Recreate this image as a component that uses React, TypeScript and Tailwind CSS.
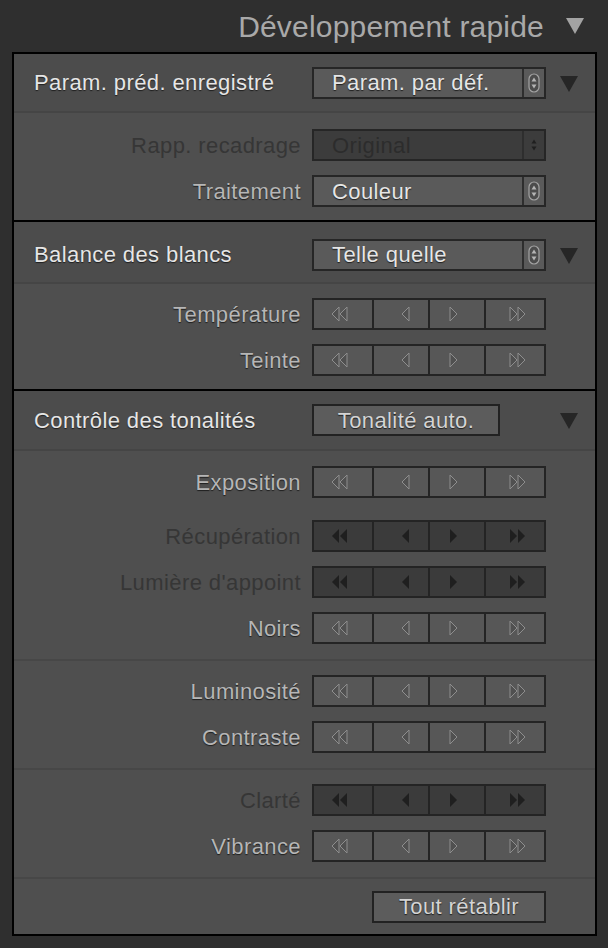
import React from 'react';

const font = '[font-family:"Liberation_Sans",Arial,sans-serif]';
const shadow = '[text-shadow:0_1px_1px_#1e1e1e]';

function Tri({ dir, x, dim }: { dir: 'l' | 'r'; x: number; dim?: boolean }) {
  const pts = dir === 'l' ? `${x + 7},1 ${x},8 ${x + 7},15` : `${x},1 ${x + 7},8 ${x},15`;
  return dim ? (
    <polygon points={pts} fill="#1f1f1f" />
  ) : (
    <polygon points={pts} fill="#505050" stroke="#8e8e8e" strokeWidth="1" strokeLinejoin="round" />
  );
}

function StepIcon({ kind, dim }: { kind: 'll' | 'l' | 'r' | 'rr'; dim?: boolean }) {
  const w = kind.length === 2 ? 18 : 9;
  return (
    <svg width={w} height={16} viewBox={`0 0 ${w} 16`}>
      {kind === 'll' && (
        <>
          <Tri dir="l" x={1} dim={dim} />
          <Tri dir="l" x={9} dim={dim} />
        </>
      )}
      {kind === 'l' && <Tri dir="l" x={1} dim={dim} />}
      {kind === 'r' && <Tri dir="r" x={1} dim={dim} />}
      {kind === 'rr' && (
        <>
          <Tri dir="r" x={1} dim={dim} />
          <Tri dir="r" x={9} dim={dim} />
        </>
      )}
    </svg>
  );
}

function Stepper({ dim }: { dim?: boolean }) {
  const cells: { k: 'll' | 'l' | 'r' | 'rr'; w: string; j: string }[] = [
    { k: 'll', w: 'w-[60px]', j: 'justify-center pr-[6px]' },
    { k: 'l', w: 'w-[56px]', j: 'justify-center pl-[8px]' },
    { k: 'r', w: 'w-[56px]', j: 'justify-center pr-[8px]' },
    { k: 'rr', w: 'flex-1', j: 'justify-center pl-[6px]' },
  ];
  return (
    <div
      className={`flex h-[32px] w-[234px] border-2 border-[#242424] ${
        dim ? 'bg-[#3b3b3b]' : 'bg-[#575757]'
      }`}
    >
      {cells.map((c, i) => (
        <div
          key={c.k}
          className={`flex items-center ${c.w} ${c.j} ${i < 3 ? 'border-r-2 border-[#242424]' : ''}`}
        >
          <StepIcon kind={c.k} dim={dim} />
        </div>
      ))}
    </div>
  );
}

function Spinner({ dim }: { dim?: boolean }) {
  return (
    <svg width="12" height="20" viewBox="0 0 12 20">
      {!dim && <rect x="1" y="1" width="10" height="18" rx="5" fill="#4c4c4c" stroke="#a4a4a4" strokeWidth="1.2" />}
      <polygon points="3.5,8.5 6,4.5 8.5,8.5" fill={dim ? '#1f1f1f' : '#b4b4b4'} />
      <polygon points="3.5,11.5 6,15.5 8.5,11.5" fill={dim ? '#1f1f1f' : '#b4b4b4'} />
    </svg>
  );
}

function Select({ value, dim }: { value: string; dim?: boolean }) {
  return (
    <div
      className={`flex h-[32px] w-[234px] border-2 border-[#262626] ${
        dim ? 'bg-[#3c3c3c]' : 'bg-[#5a5a5a]'
      }`}
    >
      <div
        className={`flex flex-1 items-center pl-[18px] text-[22px] tracking-[0.4px] ${
          dim ? 'text-[#2c2c2c]' : `text-[#e6e6e6] ${shadow}`
        }`}
      >
        {value}
      </div>
      <div className="flex w-[22px] items-center justify-center border-l-2 border-[#2e2e2e]">
        <Spinner dim={dim} />
      </div>
    </div>
  );
}

function Button({ label, w }: { label: string; w: string }) {
  return (
    <div
      className={`flex h-[32px] ${w} items-center justify-center border-2 border-[#222] bg-[#5c5c5c] text-[22px] tracking-[0.4px] text-[#d4d4d4] ${shadow}`}
    >
      {label}
    </div>
  );
}

function Triangle({ color = '#262626' }: { color?: string }) {
  return (
    <svg width="18" height="16" viewBox="0 0 18 16">
      <polygon points="0,0 18,0 9,16" fill={color} />
    </svg>
  );
}

function Row({ label, dim, children, extra = '' }: { label: string; dim?: boolean; children: React.ReactNode; extra?: string }) {
  return (
    <div className={`flex h-[46px] items-center ${extra}`}>
      <div
        className={`w-[287px] text-right text-[22px] tracking-[0.4px] ${
          dim ? 'text-[#363636]' : `text-[#b6b6b6] ${shadow}`
        }`}
      >
        {label}
      </div>
      <div className="ml-[11px]">{children}</div>
    </div>
  );
}

function Header({ title, children, h = 'h-[60px]' }: { title: string; children: React.ReactNode; h?: string }) {
  return (
    <div className={`flex ${h} items-center border-b-2 border-[#454545] bg-[#4c4c4c]`}>
      <div className={`w-[298px] pl-[20px] text-[22px] tracking-[0.4px] text-[#e6e6e6] ${shadow}`}>{title}</div>
      <div className="w-[234px]">{children}</div>
      <div className="ml-[14px] pt-[2px]">
        <Triangle />
      </div>
    </div>
  );
}

function Group({ children, last, pad = 'pt-[7px] pb-[8px]' }: { children: React.ReactNode; last?: boolean; pad?: string }) {
  return <div className={`${pad} ${last ? '' : 'border-b-2 border-[#474747]'}`}>{children}</div>;
}

export default function App() {
  return (
    <div className={`h-[948px] w-[608px] bg-[#2f2f2f] ${font}`}>
      <div className="flex h-[52px] items-center justify-end pr-[24px]">
        <span className="mr-[22px] text-[30px] tracking-[0.2px] text-[#a9a9a9]">Développement rapide</span>
        <Triangle color="#a3a3a3" />
      </div>
      <div className="ml-[12px] w-[585px] border-2 border-black bg-[#4f4f4f]">
        <div className="border-b-2 border-black">
          <Header title="Param. préd. enregistré" h="h-[59px]">
            <Select value="Param. par déf." />
          </Header>
          <Group last pad="pt-[9px] pb-[6px]">
            <Row label="Rapp. recadrage" dim>
              <Select value="Original" dim />
            </Row>
            <Row label="Traitement">
              <Select value="Couleur" />
            </Row>
          </Group>
        </div>
        <div className="border-b-2 border-black">
          <Header title="Balance des blancs" h="h-[62px] pt-[5px]">
            <Select value="Telle quelle" />
          </Header>
          <Group last pad="pt-[7px] pb-[6px]">
            <Row label="Température">
              <Stepper />
            </Row>
            <Row label="Teinte">
              <Stepper />
            </Row>
          </Group>
        </div>
        <div>
          <Header title="Contrôle des tonalités">
            <Button label="Tonalité auto." w="w-[188px]" />
          </Header>
          <Group pad="pt-[8px] pb-[8px]">
            <Row label="Exposition" extra="mb-[8px]">
              <Stepper />
            </Row>
            <Row label="Récupération" dim>
              <Stepper dim />
            </Row>
            <Row label="Lumière d'appoint" dim>
              <Stepper dim />
            </Row>
            <Row label="Noirs">
              <Stepper />
            </Row>
          </Group>
          <Group>
            <Row label="Luminosité">
              <Stepper />
            </Row>
            <Row label="Contraste">
              <Stepper />
            </Row>
          </Group>
          <Group>
            <Row label="Clarté" dim>
              <Stepper dim />
            </Row>
            <Row label="Vibrance">
              <Stepper />
            </Row>
          </Group>
          <div className="flex h-[55px] items-center justify-end pr-[49px]">
            <Button label="Tout rétablir" w="w-[174px]" />
          </div>
        </div>
      </div>
    </div>
  );
}
